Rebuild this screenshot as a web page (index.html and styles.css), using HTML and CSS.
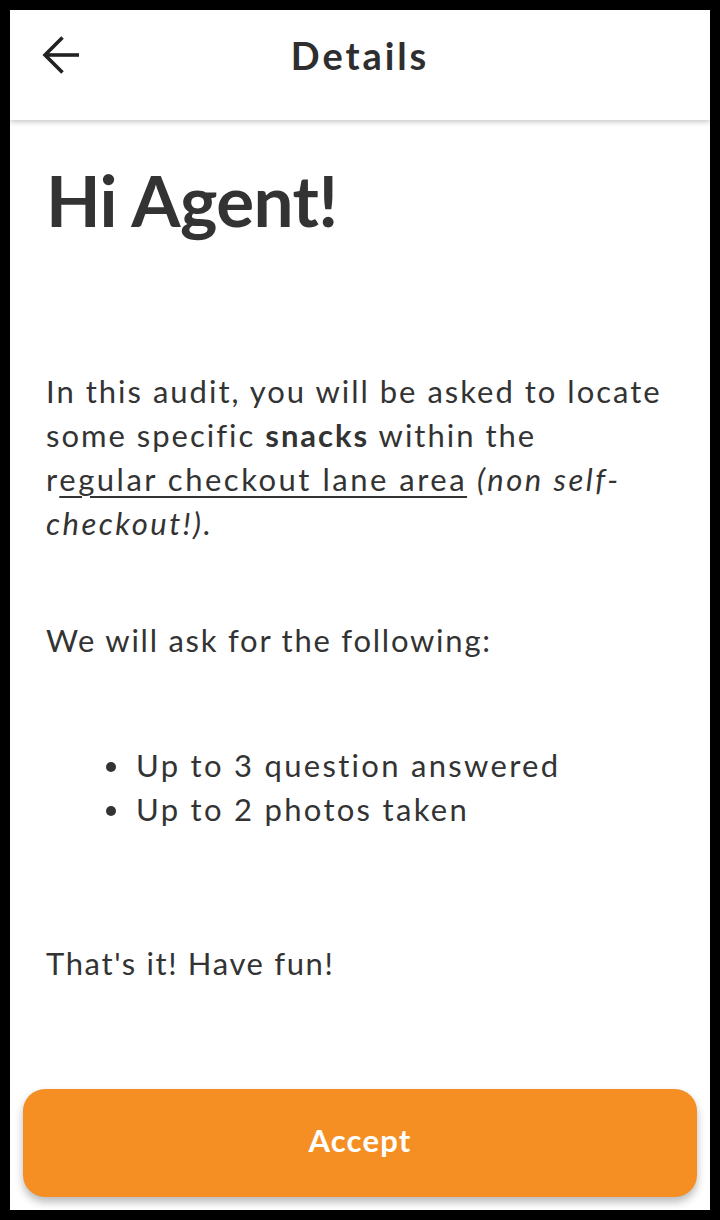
FILE: index.html
```html
<!DOCTYPE html>
<html lang="en">
<head>
<meta charset="utf-8">
<title>Details</title>
<link rel="stylesheet" href="styles.css">
</head>
<body>
<div class="frame">
  <header class="topbar">
    <button class="back" aria-label="Back">
      <svg width="40" height="40" viewBox="0 0 40 40" fill="none" stroke="#222" stroke-width="3.6" stroke-linecap="butt" stroke-linejoin="miter">
        <path d="M38 19H6"/>
        <path d="M21.5 1.5L4 19l17.5 17.5"/>
      </svg>
    </button>
    <h1 class="title">Details</h1>
  </header>
  <main class="content">
    <h2 class="greeting">Hi Agent!</h2>
    <p class="para intro"><span>In this audit, you will be asked to locate</span><br><span>some specific </span><b>snacks</b><span> within the</span><br><span>r</span><u>egular checkout lane area</u> <i><span>(non self-</span><br><span>checkout!).</span></i></p>
    <p class="para ask">We will ask for the following:</p>
    <ul class="list">
      <li>Up to 3 question answered</li>
      <li>Up to 2 photos taken</li>
    </ul>
    <p class="para outro">That's it! Have fun!</p>
  </main>
  <div class="footer">
    <button class="accept">Accept</button>
  </div>
</div>
</body>
</html>
```
FILE: styles.css
```css
* { box-sizing: border-box; }
html, body { margin: 0; padding: 0; background: #000; }
body { font-family: "Lato", "Liberation Sans", sans-serif; color: #333; }
.frame {
  margin: 10px;
  width: 700px;
  height: 1200px;
  background: #fff;
  display: flex;
  flex-direction: column;
  overflow: hidden;
}
.topbar {
  position: relative;
  height: 110px;
  flex: none;
  display: flex;
  align-items: flex-start;
  justify-content: center;
  padding-top: 22px;
  box-shadow: 0 2px 5px rgba(0,0,0,0.22);
  background: #fff;
  z-index: 1;
}
.back {
  position: absolute;
  left: 31px;
  top: 26px;
  padding: 0;
  border: 0;
  background: none;
  width: 40px;
  height: 40px;
}
.back svg { display: block; }
.title {
  margin: 0;
  font-size: 38px;
  line-height: 46px;
  font-weight: 700;
  color: #2e2e2e;
  letter-spacing: 2.9px;
}
.content {
  flex: 1;
  padding: 37px 36px 0 36px;
}
.greeting {
  margin: 0;
  font-size: 71px;
  line-height: 85px;
  font-weight: 700;
  letter-spacing: -0.6px;
  color: #333;
}
.para {
  margin: 0;
  font-size: 31px;
  line-height: 44px;
  letter-spacing: 2px;
}
.para i { letter-spacing: 2.5px; }
.intro { margin-top: 127px; }
.ask { margin-top: 73px; letter-spacing: 1.76px; }
.list {
  list-style: none;
  margin: 81px 0 0 0;
  padding-left: 60px;
  font-size: 31px;
  line-height: 44px;
  letter-spacing: 2.3px;
}
.list li {
  display: flex;
  align-items: center;
  gap: 20px;
}
.list li::before {
  content: "";
  flex: none;
  width: 10px;
  height: 10px;
  margin-top: 3px;
  border-radius: 50%;
  background: #333;
}
.outro { margin-top: 110px; letter-spacing: 1.63px; }
u { text-decoration-thickness: 2px; text-underline-offset: 5px; letter-spacing: 2.5px; }
.footer {
  flex: none;
  padding: 0 13px 13px 13px;
}
.accept {
  display: block;
  width: 100%;
  height: 108px;
  padding: 0 0 6px 0;
  border: 0;
  border-radius: 22px;
  background: #f58f23;
  color: #fff;
  font-family: "Lato", "Liberation Sans", sans-serif;
  font-size: 31px;
  font-weight: 700;
  letter-spacing: 1.2px;
  box-shadow: 0 5px 9px rgba(0,0,0,0.28);
}
```
